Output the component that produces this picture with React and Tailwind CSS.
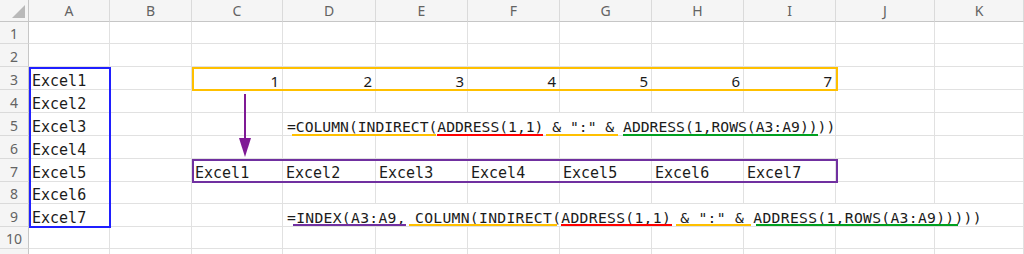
const COLS = ["A", "B", "C", "D", "E", "F", "G", "H", "I", "J", "K"];

const mono = { fontFamily: '"DejaVu Sans Mono", "Liberation Mono", monospace' };

const Cell = ({ children, className = "" }) => (
  <div className={`border-r border-b border-[#e1e1e1] flex items-end leading-[16px] whitespace-nowrap ${className}`}>
    {children}
  </div>
);

const Mark = ({ children, bar }) => (
  <span className="relative">
    {children}
    <span className={`absolute h-[2px] ${bar}`} />
  </span>
);

const TextCell = ({ children }) => (
  <Cell className="pl-[3px] text-[15px] text-[#1b1b1b]">
    <span style={mono}>{children}</span>
  </Cell>
);

const NumCell = ({ children }) => (
  <Cell className="justify-end pr-[3px] text-[15px] text-[#1b1b1b] font-['Noto_Sans',sans-serif]">{children}</Cell>
);

const Empty = () => <Cell />;

const RowHead = ({ n }) => (
  <div className="bg-[#f5f5f5] border-r border-b border-r-[#c6c6c6] border-b-[#dadada] flex items-end justify-center leading-[16px] pb-[1px] text-[14px] text-[#636363] font-['Noto_Sans',sans-serif]">
    {n}
  </div>
);

const Formula5 = () => (
  <Cell className="col-span-6 pl-[4px] text-[14.7px] text-[#1b1b1b] overflow-visible">
    <span style={mono}>
      =
      <Mark bar="-left-[4px] right-[1px] -bottom-[1px] bg-[#ffc000]">COLUMN(INDIRECT(</Mark>
      <Mark bar="left-0 right-0 -bottom-[1px] bg-[#ff0000]">ADDRESS(1,1)</Mark>
      <Mark bar="left-[3px] right-[5px] -bottom-[1px] bg-[#ffc000]">{' & ":" & '}</Mark>
      <Mark bar="left-0 right-0 -bottom-[1px] bg-[#00a020]">ADDRESS(1,ROWS(A3:A9))</Mark>
      ))
    </span>
  </Cell>
);

const Formula9 = () => (
  <Cell className="col-span-8 pl-[4px] text-[14.7px] tracking-[0.3px] text-[#1b1b1b] overflow-visible">
    <span style={mono}>
      =
      <Mark bar="-left-[3px] right-0 bottom-0 bg-[#7030a0]">INDEX(A3:A9,</Mark>
      <Mark bar="left-[3px] right-[4px] bottom-0 bg-[#ffc000]">{" COLUMN(INDIRECT("}</Mark>
      <Mark bar="left-0 -right-[1px] bottom-0 bg-[#ff0000]">ADDRESS(1,1)</Mark>
      <Mark bar="left-[5px] right-[2px] bottom-0 bg-[#ffc000]">{' & ":" & '}</Mark>
      <Mark bar="left-[3px] -right-[4px] bottom-0 bg-[#00a020]">ADDRESS(1,ROWS(A3:A9))</Mark>
      )))
    </span>
  </Cell>
);

const App = () => {
  const rows = [];
  for (let r = 1; r <= 11; r++) {
    const cells = [<RowHead key="h" n={r <= 10 ? r : ""} />];
    const a = r >= 3 && r <= 9 ? `Excel${r - 2}` : null;
    cells.push(a ? <TextCell key="A">{a}</TextCell> : <Empty key="A" />);
    cells.push(<Empty key="B" />);
    if (r === 3) {
      [1, 2, 3, 4, 5, 6, 7].forEach((n) => cells.push(<NumCell key={n}>{n}</NumCell>));
      cells.push(<Empty key="J" />, <Empty key="K" />);
    } else if (r === 7) {
      [1, 2, 3, 4, 5, 6, 7].forEach((n) => cells.push(<TextCell key={n}>{`Excel${n}`}</TextCell>));
      cells.push(<Empty key="J" />, <Empty key="K" />);
    } else if (r === 5) {
      cells.push(<Empty key="C" />, <Formula5 key="D" />, <Empty key="J" />, <Empty key="K" />);
    } else if (r === 9) {
      cells.push(<Empty key="C" />, <Formula9 key="D" />);
    } else {
      COLS.slice(2).forEach((c) => cells.push(<Empty key={c} />));
    }
    rows.push(...cells.map((c, i) => ({ ...c, key: `${r}-${i}` })));
  }

  return (
    <div className="relative w-[1024px] h-[254px] overflow-hidden bg-white">
      <div className="grid grid-cols-[29px_81px_82px_91px_93px_92px_92px_92px_92px_92px_99px_1fr] grid-rows-[22px_22px_23px_23px_23px_23px_23px_23px_22px_23px_22px_23px]">
        <div className="relative bg-[#f5f5f5] border-r border-b border-r-[#c6c6c6] border-b-[#c6c6c6]">
          <svg className="absolute right-[3px] bottom-[3px]" width="13" height="13" viewBox="0 0 13 13">
            <polygon points="13,0 13,13 0,13" fill="#b9b9b9" />
          </svg>
        </div>
        {COLS.map((c) => (
          <div
            key={c}
            className="bg-[#f5f5f5] border-r border-b border-r-[#dadada] border-b-[#c6c6c6] flex items-center justify-center text-[14px] text-[#636363] font-['Noto_Sans',sans-serif]"
          >
            {c}
          </div>
        ))}
        {rows}
      </div>

      <div className="absolute left-[29px] top-[67px] w-[82px] h-[161px] border-2 border-[#1f1fff]" />
      <div className="absolute left-[192px] top-[67px] w-[646px] h-[24px] border-2 border-[#ffc000]" />
      <div className="absolute left-[192px] top-[159px] w-[646px] h-[24px] border-2 border-[#7030a0]" />

      <svg className="absolute left-[233px] top-[92px]" width="24" height="68" viewBox="0 0 24 68">
        <line x1="12" y1="2" x2="12" y2="50" stroke="#7f1a95" strokeWidth="2" />
        <polygon points="6,46 18,46 12,65" fill="#7f1a95" />
      </svg>
    </div>
  );
};

export default App;
